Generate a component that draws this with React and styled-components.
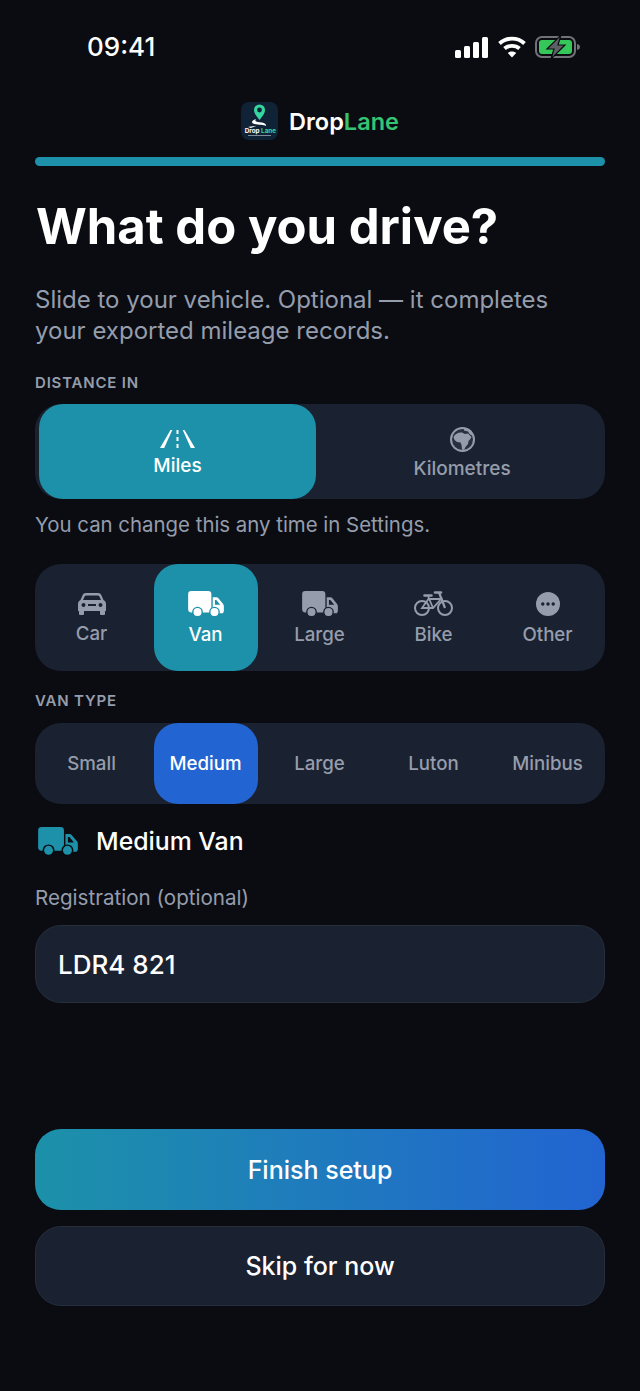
import React from 'react';
import styled, { createGlobalStyle } from 'styled-components';

const GlobalStyle = createGlobalStyle`
  html, body { margin: 0; padding: 0; background: #0a0c12; }
  * { box-sizing: border-box; }
`;

const teal = '#1c91a9';
const blue = '#2264d1';
const panel = '#1a2130';
const muted = '#959dac';

const Page = styled.div`
  width: 640px;
  height: 1391px;
  padding: 0 35px;
  background: #0a0c12;
  color: #fff;
  font-family: Inter, "Liberation Sans", sans-serif;
  display: flex;
  flex-direction: column;
  overflow: hidden;
`;

const StatusBar = styled.div`
  height: 102px;
  padding: 30px 24px 0 52px;
  display: flex;
  justify-content: space-between;
  align-items: flex-start;
`;

const Time = styled.div`
  font-size: 26px;
  line-height: 34px;
  font-weight: 500;
`;

const StatusIcons = styled.div`
  display: flex;
  align-items: center;
  gap: 9px;
  height: 34px;
`;

const Brand = styled.div`
  height: 38px;
  display: flex;
  justify-content: center;
  align-items: center;
  gap: 11px;
`;

const BrandName = styled.div`
  font-size: 23.5px;
  font-weight: 600;
  color: #fff;
  span { color: #35c474; }
`;

const Progress = styled.div`
  height: 9px;
  margin-top: 17px;
  border-radius: 5px;
  background: ${teal};
`;

const Title = styled.h1`
  margin: 31px 0 0 1px;
  font-size: 49px;
  line-height: 60px;
  font-weight: 700;
`;

const Subtitle = styled.p`
  margin: 27px 0 0;
  font-size: 24px;
  line-height: 31px;
  font-weight: 400;
  color: ${muted};
`;

const Label = styled.div`
  margin-top: ${p => p.$top}px;
  font-size: 15px;
  line-height: 20px;
  font-weight: 600;
  letter-spacing: 0.8px;
  color: ${muted};
`;

const Panel = styled.div`
  margin-top: ${p => p.$top}px;
  height: ${p => p.$height}px;
  border-radius: 26px;
  background: ${panel};
  display: flex;
  align-items: stretch;
`;

const UnitTab = styled.div`
  flex: ${p => (p.$active ? '0 0 277px' : '1')};
  margin-left: ${p => (p.$active ? '4px' : '0')};
  padding: ${p => (p.$active ? '4px 0 0' : '4px 0 0 3px')};
  border-radius: 24px;
  background: ${p => (p.$active ? teal : 'transparent')};
  color: ${p => (p.$active ? '#fff' : muted)};
  display: flex;
  flex-direction: column;
  align-items: center;
  justify-content: center;
  gap: ${p => (p.$active ? '7px' : '6px')};
  font-size: 19px;
  line-height: 22px;
  font-weight: 500;
`;

const Cell = styled.div`
  flex: 1;
  display: flex;
  justify-content: center;
  align-items: stretch;
`;

const CellInner = styled.div`
  width: 104px;
  padding: ${p => (p.$hasIcon ? '2px 1px 0 0' : '0 1px 0 0')};
  border-radius: 24px;
  background: ${p => p.$bg || 'transparent'};
  color: ${p => (p.$active ? '#fff' : muted)};
  display: flex;
  flex-direction: column;
  align-items: center;
  justify-content: center;
  gap: 8px;
  font-size: 18.7px;
  line-height: 22px;
  font-weight: 500;
  svg { display: block; }
`;

const Hint = styled.div`
  margin-top: 13px;
  font-size: 20.4px;
  line-height: 26px;
  color: ${muted};
`;

const Selected = styled.div`
  margin-top: 21px;
  height: 32px;
  padding-left: 3px;
  display: flex;
  align-items: center;
  gap: 18px;
  font-size: 24.8px;
  font-weight: 500;
`;

const SelectedIcon = styled.span`
  display: flex;
  color: ${teal};
`;

const FieldLabel = styled.div`
  margin-top: 28px;
  font-size: 20.6px;
  line-height: 26px;
  color: ${muted};
`;

const Input = styled.div`
  margin-top: 14px;
  height: 78px;
  padding: 0 22px;
  border: 1px solid #262d3c;
  border-radius: 26px;
  background: ${panel};
  display: flex;
  align-items: center;
  font-size: 26px;
  font-weight: 500;
`;

const Button = styled.div`
  margin-top: ${p => p.$top}px;
  height: ${p => (p.$primary ? '81px' : '80px')};
  border-radius: 26px;
  display: flex;
  align-items: center;
  justify-content: center;
  font-size: 25px;
  font-weight: 500;
  background: ${p => (p.$primary ? `linear-gradient(90deg, ${teal}, ${blue})` : panel)};
  border: ${p => (p.$primary ? 'none' : '1px solid #262d3c')};
`;

const Signal = () => (
  <svg width="34" height="21" viewBox="0 0 34 21" fill="#fff">
    <rect x="0" y="13" width="6" height="8" rx="1.500" />
    <rect x="9" y="9" width="6" height="12" rx="1.500" />
    <rect x="18" y="5" width="6" height="16" rx="1.500" />
    <rect x="27" y="0" width="6" height="21" rx="1.500" />
  </svg>
);

const Wifi = () => (
  <svg width="28" height="22" viewBox="0 0 28 22" fill="none" stroke="#fff" strokeWidth="3.800">
    <path d="M1.500 7.500C8.500 1 19.500 1 26.500 7.500" />
    <path d="M6.500 12.500C10.500 9 17.500 9 21.500 12.500" />
    <path d="M14 21.500L9.800 17C12 15 16 15 18.200 17Z" fill="#fff" stroke="none" />
  </svg>
);

const Battery = () => (
  <svg width="46" height="24" viewBox="0 0 46 24">
    <rect x="1" y="2" width="39" height="20" rx="6" fill="none" stroke="#6f7377" strokeWidth="2" />
    <rect x="4" y="5" width="33" height="14" rx="3" fill="#35c75a" />
    <path d="M42 9c2 .4 3 1.500 3 3s-1 2.600-3 3z" fill="#6f7377" />
    <path d="M26 0L12 14h7l-3 10 14-14h-7z" fill="#5d6166" stroke="#0a0c12" strokeWidth="1.200" />
  </svg>
);

const AppLogo = () => (
  <svg width="37" height="38" viewBox="0 0 37 38">
    <rect width="37" height="38" rx="8" fill="#0f2236" />
    <path d="M18.500 18c-3.500-4.500-5.500-7-5.500-10a5.500 5.500 0 0 1 11 0c0 3-2 5.500-5.500 10z" fill="#35d6a0" />
    <circle cx="18.500" cy="8" r="2.400" fill="#0f2236" />
    <path d="M15 17c-4 1.500-5 3-3 4.500 2 1 6 1 8 1.200 2 .2 4 .6 5 1.300.5-1.500-1-3-4-3.500-3-.5-6-.5-6.500-1.500-.3-.6 0-1.200.5-2z" fill="#fff" />
    <path d="M7 25c3-.8 6-.8 8-.4-2 .4-4 .8-5 1.400z" fill="#fff" />
    <text x="3.800" y="31" fontSize="6.300" fontWeight="700" fontFamily="Inter, sans-serif" fill="#fff">
      Drop <tspan fill="#35d6a0">Lane</tspan>
    </text>
    <rect x="7" y="33" width="23" height="1" fill="#7f8b99" />
  </svg>
);

const RoadIcon = () => (
  <svg width="35" height="18" viewBox="0 0 35 18" fill="currentColor">
    <path d="M10.500 0h1.800L4.200 18H0z" />
    <path d="M22.700 0h1.800L35 18h-4.200z" />
    <rect x="16.500" y="0" width="2" height="4" />
    <rect x="16.500" y="7" width="2" height="4" />
    <rect x="16.500" y="14" width="2" height="4" />
  </svg>
);

const GlobeIcon = () => (
  <svg width="25" height="25" viewBox="0 0 25 25">
    <circle cx="12.500" cy="12.500" r="12.500" fill="currentColor" />
    <circle cx="12.500" cy="12.500" r="10.500" fill="#293040" />
    <path d="M3.500 10C5 6.500 9 5 12 5.500L15 7l3-.5L21.500 10 20 12.500 18.500 14l-.5 3-2.500 3-1.500 3-2-.5-.5-4.500-1-2.500-3.500-.5-2.500-2z" fill="currentColor" />
    <path d="M14 1.500l7 2 2.500 5.500-3.500-1.500-2-3-4-1z" fill="currentColor" />
  </svg>
);

const CarIcon = () => (
  <svg width="28" height="22" viewBox="0 0 28 22" fill="currentColor">
    <path fillRule="evenodd" d="M8 0h12c1.600 0 2.800.8 3.400 2.200L25.500 7c1.500.8 2.500 2.200 2.500 4v7H0v-7c0-1.800 1-3.200 2.500-4l2.100-4.800C5.200.8 6.400 0 8 0zm.2 2.400c-.8 0-1.300.3-1.600 1L5 7h18l-1.600-3.600c-.3-.7-.8-1-1.600-1zM5.500 10a2 2 0 1 0 0 4 2 2 0 0 0 0-4zm17 0a2 2 0 1 0 0 4 2 2 0 0 0 0-4zM10 11v2h8v-2z" />
    <rect x="1" y="17" width="5" height="5" rx="1" />
    <rect x="22" y="17" width="5" height="5" rx="1" />
  </svg>
);

const TruckIcon = ({ size = 36, bg = panel }) => (
  <svg width={size} height={size * 0.72} viewBox="0 0 40 29" fill="currentColor">
    <path d="M3.500 0h19A3.500 3.500 0 0 1 26 3.500V24H3.500A3.500 3.500 0 0 1 0 20.500v-17A3.500 3.500 0 0 1 3.500 0z" />
    <path d="M27.500 7h4c1 0 1.800.4 2.400 1.200l5 6c.7.800 1.100 1.700 1.100 2.800v5c0 1.200-.8 3-2 3H27.500z" />
    <path d="M30 10h1.500l4.500 5.500H30z" fill={bg} />
    <circle cx="10.500" cy="23.500" r="6" fill={bg} />
    <circle cx="10.500" cy="23.500" r="4.500" />
    <circle cx="29.500" cy="23.500" r="6" fill={bg} />
    <circle cx="29.500" cy="23.500" r="4.500" />
  </svg>
);

const BikeIcon = () => (
  <svg width="39" height="25" viewBox="0 0 39 25" fill="none" stroke="currentColor" strokeWidth="2">
    <circle cx="8" cy="17" r="7" />
    <circle cx="31" cy="17" r="7" />
    <path d="M8 17h11L27 8H14.500zM8 17l6.500-9M19 17L14 5" strokeWidth="1.800" />
    <path d="M31 17L25 1.500" strokeWidth="2.200" />
    <path d="M10.500 4.500h7M21 1.500h6" strokeWidth="2.600" strokeLinecap="round" />
  </svg>
);

const MoreIcon = () => (
  <svg width="24" height="24" viewBox="0 0 24 24">
    <circle cx="12" cy="12" r="12" fill="currentColor" />
    <circle cx="6.800" cy="12" r="1.700" fill={panel} />
    <circle cx="12" cy="12" r="1.700" fill={panel} />
    <circle cx="17.200" cy="12" r="1.700" fill={panel} />
  </svg>
);

const vehicles = [
  { name: 'Car', icon: <CarIcon /> },
  { name: 'Van', icon: <TruckIcon bg={teal} />, active: true },
  { name: 'Large', icon: <TruckIcon /> },
  { name: 'Bike', icon: <BikeIcon /> },
  { name: 'Other', icon: <MoreIcon /> },
];

const vanTypes = ['Small', 'Medium', 'Large', 'Luton', 'Minibus'];

export default function App() {
  return (
    <Page>
      <GlobalStyle />
      <StatusBar>
        <Time>09:41</Time>
        <StatusIcons>
          <Signal />
          <Wifi />
          <Battery />
        </StatusIcons>
      </StatusBar>
      <Brand>
        <AppLogo />
        <BrandName>Drop<span>Lane</span></BrandName>
      </Brand>
      <Progress />
      <Title>What do you drive?</Title>
      <Subtitle>Slide to your vehicle. Optional — it completes your exported mileage records.</Subtitle>
      <Label $top={27}>DISTANCE IN</Label>
      <Panel $top={11} $height={95}>
        <UnitTab $active>
          <RoadIcon />
          Miles
        </UnitTab>
        <UnitTab>
          <GlobeIcon />
          Kilometres
        </UnitTab>
      </Panel>
      <Hint>You can change this any time in Settings.</Hint>
      <Panel $top={26} $height={107}>
        {vehicles.map(v => (
          <Cell key={v.name}>
            <CellInner $hasIcon $active={v.active} $bg={v.active ? teal : undefined}>
              {v.icon}
              {v.name}
            </CellInner>
          </Cell>
        ))}
      </Panel>
      <Label $top={20}>VAN TYPE</Label>
      <Panel $top={12} $height={81}>
        {vanTypes.map(t => (
          <Cell key={t}>
            <CellInner $active={t === 'Medium'} $bg={t === 'Medium' ? blue : undefined}>{t}</CellInner>
          </Cell>
        ))}
      </Panel>
      <Selected>
        <SelectedIcon><TruckIcon size={40} bg="#0a0c12" /></SelectedIcon>
        Medium Van
      </Selected>
      <FieldLabel>Registration (optional)</FieldLabel>
      <Input>LDR4 821</Input>
      <Button $primary $top={126}>Finish setup</Button>
      <Button $top={16}>Skip for now</Button>
    </Page>
  );
}
